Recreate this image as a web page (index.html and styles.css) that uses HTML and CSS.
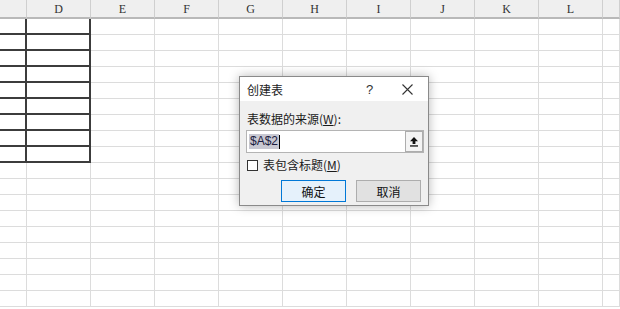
FILE: index.html
```html
<!DOCTYPE html>
<html lang="zh-CN">
<head>
<meta charset="utf-8">
<title>创建表</title>
<link rel="stylesheet" href="styles.css">
</head>
<body>
<div class="sheet">
  <div class="h"></div><div class="h">D</div><div class="h">E</div><div class="h">F</div><div class="h">G</div><div class="h">H</div><div class="h">I</div><div class="h">J</div><div class="h">K</div><div class="h">L</div><div class="h"></div>
  <div class="c b"></div><div class="c b"></div><div class="c"></div><div class="c"></div><div class="c"></div><div class="c"></div><div class="c"></div><div class="c"></div><div class="c"></div><div class="c"></div><div class="c"></div>
  <div class="c b"></div><div class="c b"></div><div class="c"></div><div class="c"></div><div class="c"></div><div class="c"></div><div class="c"></div><div class="c"></div><div class="c"></div><div class="c"></div><div class="c"></div>
  <div class="c b"></div><div class="c b"></div><div class="c"></div><div class="c"></div><div class="c"></div><div class="c"></div><div class="c"></div><div class="c"></div><div class="c"></div><div class="c"></div><div class="c"></div>
  <div class="c b"></div><div class="c b"></div><div class="c"></div><div class="c"></div><div class="c"></div><div class="c"></div><div class="c"></div><div class="c"></div><div class="c"></div><div class="c"></div><div class="c"></div>
  <div class="c b"></div><div class="c b"></div><div class="c"></div><div class="c"></div><div class="c"></div><div class="c"></div><div class="c"></div><div class="c"></div><div class="c"></div><div class="c"></div><div class="c"></div>
  <div class="c b"></div><div class="c b"></div><div class="c"></div><div class="c"></div><div class="c"></div><div class="c"></div><div class="c"></div><div class="c"></div><div class="c"></div><div class="c"></div><div class="c"></div>
  <div class="c b"></div><div class="c b"></div><div class="c"></div><div class="c"></div><div class="c"></div><div class="c"></div><div class="c"></div><div class="c"></div><div class="c"></div><div class="c"></div><div class="c"></div>
  <div class="c b"></div><div class="c b"></div><div class="c"></div><div class="c"></div><div class="c"></div><div class="c"></div><div class="c"></div><div class="c"></div><div class="c"></div><div class="c"></div><div class="c"></div>
  <div class="c b"></div><div class="c b"></div><div class="c"></div><div class="c"></div><div class="c"></div><div class="c"></div><div class="c"></div><div class="c"></div><div class="c"></div><div class="c"></div><div class="c"></div>
  <div class="c"></div><div class="c"></div><div class="c"></div><div class="c"></div><div class="c"></div><div class="c"></div><div class="c"></div><div class="c"></div><div class="c"></div><div class="c"></div><div class="c"></div>
  <div class="c"></div><div class="c"></div><div class="c"></div><div class="c"></div><div class="c"></div><div class="c"></div><div class="c"></div><div class="c"></div><div class="c"></div><div class="c"></div><div class="c"></div>
  <div class="c"></div><div class="c"></div><div class="c"></div><div class="c"></div><div class="c"></div><div class="c"></div><div class="c"></div><div class="c"></div><div class="c"></div><div class="c"></div><div class="c"></div>
  <div class="c"></div><div class="c"></div><div class="c"></div><div class="c"></div><div class="c"></div><div class="c"></div><div class="c"></div><div class="c"></div><div class="c"></div><div class="c"></div><div class="c"></div>
  <div class="c"></div><div class="c"></div><div class="c"></div><div class="c"></div><div class="c"></div><div class="c"></div><div class="c"></div><div class="c"></div><div class="c"></div><div class="c"></div><div class="c"></div>
  <div class="c"></div><div class="c"></div><div class="c"></div><div class="c"></div><div class="c"></div><div class="c"></div><div class="c"></div><div class="c"></div><div class="c"></div><div class="c"></div><div class="c"></div>
  <div class="c"></div><div class="c"></div><div class="c"></div><div class="c"></div><div class="c"></div><div class="c"></div><div class="c"></div><div class="c"></div><div class="c"></div><div class="c"></div><div class="c"></div>
  <div class="c"></div><div class="c"></div><div class="c"></div><div class="c"></div><div class="c"></div><div class="c"></div><div class="c"></div><div class="c"></div><div class="c"></div><div class="c"></div><div class="c"></div>
  <div class="c"></div><div class="c"></div><div class="c"></div><div class="c"></div><div class="c"></div><div class="c"></div><div class="c"></div><div class="c"></div><div class="c"></div><div class="c"></div><div class="c"></div>
</div>

<div class="dialog">
  <div class="titlebar">
    <span class="title">创建表</span>
    <span class="help">?</span>
    <span class="close"><svg width="11" height="11" viewBox="0 0 11 11"><path d="M0.5 0.5L10.5 10.5M10.5 0.5L0.5 10.5" stroke="#333" stroke-width="1.1" fill="none"/></svg></span>
  </div>
  <div class="body">
    <div class="label">表数据的来源(<u>W</u>):</div>
    <div class="input">
      <span class="value"><span class="sel">$A$2</span><span class="caret"></span></span>
      <span class="pick"><svg width="10" height="11" viewBox="0 0 10 11"><path d="M5 1L1 5.2H3.6V8H6.4V5.2H9Z" fill="#111"/><rect x="1" y="9.3" width="8" height="1.3" fill="#111"/></svg></span>
    </div>
    <div class="check"><span class="box"></span><span>表包含标题(<u>M</u>)</span></div>
    <div class="buttons">
      <span class="btn ok">确定</span>
      <span class="btn">取消</span>
    </div>
  </div>
</div>
</body>
</html>
```

FILE: styles.css
```css
html, body {
  margin: 0;
  padding: 0;
  background: #fff;
  overflow: hidden;
}
body {
  width: 620px;
  height: 309px;
  position: relative;
  font-family: "Noto Sans CJK SC", "Noto Sans", sans-serif;
}
.sheet {
  display: grid;
  grid-template-columns: 27px repeat(9, 64px) 17px;
  grid-template-rows: 19px;
  grid-auto-rows: 16px;
}
.h {
  box-sizing: border-box;
  background: #efefef;
  border-right: 1px solid #cfcfcf;
  border-bottom: 2px solid #b9b9b9;
  font-family: "Liberation Serif", "DejaVu Serif", serif;
  font-size: 12px;
  color: #333;
  text-align: center;
  line-height: 18px;
}
.c {
  box-sizing: border-box;
  border-right: 1px solid #dcdcdc;
  border-bottom: 1px solid #dcdcdc;
}
.c.b {
  border-right: 2px solid #3c3c3c;
  border-bottom: 2px solid #3c3c3c;
}
.dialog {
  position: absolute;
  left: 239px;
  top: 76px;
  width: 190px;
  height: 130px;
  box-sizing: border-box;
  border: 1px solid #8a8a8a;
  background: #f0f0f0;
  box-shadow: 0 0 10px rgba(0,0,0,0.28);
  display: flex;
  flex-direction: column;
  font-size: 12px;
  color: #000;
}
.titlebar {
  height: 24px;
  background: #fff;
  display: flex;
  align-items: center;
  padding-left: 7px;
}
.title {
  flex: 1;
  color: #222;
}
.help {
  width: 20px;
  font-family: "Liberation Sans", sans-serif;
  font-size: 13px;
  color: #333;
}
.close {
  width: 42px;
  display: flex;
  align-items: center;
  justify-content: center;
}
.body {
  padding: 10px 6px 0 6px;
  display: flex;
  flex-direction: column;
}
.label {
  line-height: 16px;
  padding-left: 1px;
  color: #1a1a1a;
}
.input {
  margin-top: 3px;
  height: 23px;
  box-sizing: border-box;
  border: 1px solid #b4b4b4;
  background: #fff;
  display: flex;
  align-items: center;
  padding-left: 2px;
  margin-right: -2px;
}
.value {
  flex: 1;
  display: flex;
  align-items: center;
  font-family: "Liberation Sans", sans-serif;
  font-size: 12px;
}
.sel {
  background: #c8c8d2;
  color: #1c1c40;
  line-height: 15px;
  padding: 0 1px;
}
.caret {
  width: 1px;
  height: 14px;
  background: #000;
}
.pick {
  width: 18px;
  height: 21px;
  box-sizing: border-box;
  border: 1px solid #adadad;
  background: #f4f4f4;
  display: flex;
  align-items: center;
  justify-content: center;
}
.check {
  margin-top: 4px;
  display: flex;
  align-items: center;
  gap: 5px;
  line-height: 16px;
  color: #1a1a1a;
}
.box {
  width: 11px;
  height: 11px;
  box-sizing: border-box;
  border: 1px solid #333;
  background: #fff;
  margin-left: 1px;
}
.buttons {
  margin-top: 7px;
  display: flex;
  justify-content: flex-end;
  gap: 10px;
  padding-right: 1px;
}
.btn {
  width: 65px;
  height: 22px;
  box-sizing: border-box;
  border: 1px solid #adadad;
  background: #e1e1e1;
  display: flex;
  align-items: center;
  justify-content: center;
  color: #111;
}
.btn.ok {
  border-color: #0078d7;
  background: #e5f1fb;
}
```
